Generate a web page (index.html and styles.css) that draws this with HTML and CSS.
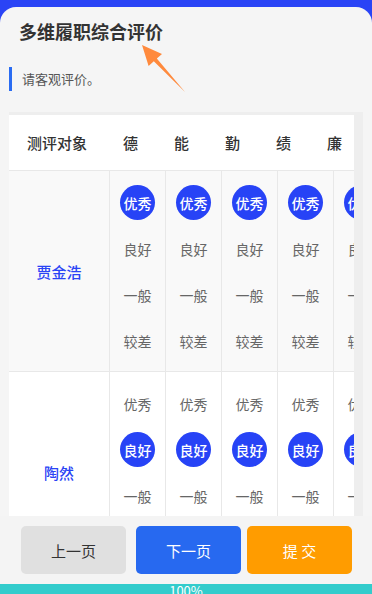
FILE: index.html
```html
<!DOCTYPE html>
<html lang="zh">
<head>
<meta charset="utf-8">
<link rel="stylesheet" href="styles.css">
</head>
<body>
<div class="page">
  <div class="card">
    <h1 class="title">多维履职综合评价</h1>
    <div class="note">请客观评价。</div>
    <div class="table-wrap">
      <div class="table-view">
        <div class="thead">
          <div class="th th-name">测评对象</div>
          <div class="th">德</div>
          <div class="th">能</div>
          <div class="th">勤</div>
          <div class="th">绩</div>
          <div class="th">廉</div>
          <div class="th">勤</div>
        </div>
        <div class="row row-odd">
          <div class="name">贾金浩</div>
          <div class="cell"><span class="opt on">优秀</span><span class="opt">良好</span><span class="opt">一般</span><span class="opt">较差</span></div>
          <div class="cell"><span class="opt on">优秀</span><span class="opt">良好</span><span class="opt">一般</span><span class="opt">较差</span></div>
          <div class="cell"><span class="opt on">优秀</span><span class="opt">良好</span><span class="opt">一般</span><span class="opt">较差</span></div>
          <div class="cell"><span class="opt on">优秀</span><span class="opt">良好</span><span class="opt">一般</span><span class="opt">较差</span></div>
          <div class="cell"><span class="opt on">优秀</span><span class="opt">良好</span><span class="opt">一般</span><span class="opt">较差</span></div>
        </div>
        <div class="row row-even">
          <div class="name">陶然</div>
          <div class="cell"><span class="opt">优秀</span><span class="opt on">良好</span><span class="opt">一般</span><span class="opt">较差</span></div>
          <div class="cell"><span class="opt">优秀</span><span class="opt on">良好</span><span class="opt">一般</span><span class="opt">较差</span></div>
          <div class="cell"><span class="opt">优秀</span><span class="opt on">良好</span><span class="opt">一般</span><span class="opt">较差</span></div>
          <div class="cell"><span class="opt">优秀</span><span class="opt on">良好</span><span class="opt">一般</span><span class="opt">较差</span></div>
          <div class="cell"><span class="opt">优秀</span><span class="opt on">良好</span><span class="opt">一般</span><span class="opt">较差</span></div>
        </div>
      </div>
    </div>
    <div class="footer">
      <button class="btn btn-prev">上一页</button>
      <button class="btn btn-next">下一页</button>
      <button class="btn btn-submit">提 交</button>
    </div>
  </div>
  <div class="progress">100%</div>
  <svg class="arrow" width="372" height="120" viewBox="0 0 372 120">
    <polygon points="142,45 162,54 156.8,58.6 185,92 153.8,61.2 148.6,66" fill="#ff8a3d"/>
  </svg>
</div>
</body>
</html>
```

FILE: styles.css
```css
* { box-sizing: border-box; }
html, body {
  margin: 0;
  padding: 0;
}
body {
  font-family: "Noto Sans CJK SC", "Noto Sans", sans-serif;
  background: #2a44f6;
}
.page {
  position: relative;
  width: 372px;
  height: 594px;
  display: flex;
  flex-direction: column;
  padding-top: 7px;
  overflow: hidden;
}
.card {
  flex: 1;
  min-height: 0;
  background: #f5f5f5;
  border-radius: 16px 16px 0 0;
  display: flex;
  flex-direction: column;
}
.title {
  margin: 0;
  padding: 12px 0 0 19px;
  font-size: 18px;
  line-height: 24px;
  font-weight: 700;
  color: #333;
}
.note {
  margin: 24px 0 0 9px;
  border-left: 3px solid #2a6cf2;
  padding-left: 10px;
  height: 24px;
  line-height: 24px;
  font-size: 13px;
  color: #555;
}
.table-wrap {
  margin: 21px 9px 0 9px;
  background: #eeeeee;
  padding: 3px 9px 0 0;
  flex: 1;
  min-height: 0;
  overflow: hidden;
}
.table-view {
  width: 345px;
  height: 100%;
  overflow: hidden;
  background: #fff;
}
.thead {
  display: grid;
  grid-template-columns: 96px repeat(6, 51px);
  height: 56px;
  border-bottom: 1px solid #e8e8e8;
  background: #fff;
  width: max-content;
}
.th {
  display: flex;
  align-items: center;
  justify-content: center;
  font-size: 15px;
  font-weight: 500;
  color: #333;
}
.row {
  display: grid;
  grid-template-columns: 100px repeat(5, 56px);
  width: max-content;
  border-bottom: 1px solid #e8e8e8;
}
.row-odd { background: #f9f9f9; }
.row-even { background: #fff; }
.name {
  display: flex;
  align-items: center;
  justify-content: center;
  font-size: 15px;
  font-weight: 500;
  color: #2a44f5;
}
.cell {
  border-left: 1px solid #e8e8e8;
  display: flex;
  flex-direction: column;
  align-items: center;
  gap: 11px;
  padding: 14px 0 13px;
}
.opt {
  width: 35px;
  height: 35px;
  display: flex;
  align-items: center;
  justify-content: center;
  font-size: 14px;
  color: #666;
  white-space: nowrap;
}
.opt.on {
  background: #2743f6;
  color: #fff;
  border-radius: 50%;
  font-weight: 500;
}
.footer {
  height: 68px;
  flex: none;
  background: #f4f4f4;
  display: flex;
  align-items: flex-start;
  padding: 10px 0 0 21px;
}
.btn {
  width: 105px;
  height: 48px;
  border: none;
  border-radius: 5px;
  font-family: inherit;
  font-size: 15px;
  padding: 0;
}
.btn-prev { background: #e0e0e0; color: #333; }
.btn-next { background: #2769f0; color: #fff; margin-left: 10px; }
.btn-submit { background: #ff9c00; color: #fff; margin-left: 6px; }
.progress {
  flex: none;
  height: 10px;
  background: #33cccc;
  color: #fff;
  font-size: 13px;
  line-height: 14px;
  text-align: center;
  overflow: hidden;
}
.arrow {
  position: absolute;
  left: 0;
  top: 0;
  pointer-events: none;
}
```
